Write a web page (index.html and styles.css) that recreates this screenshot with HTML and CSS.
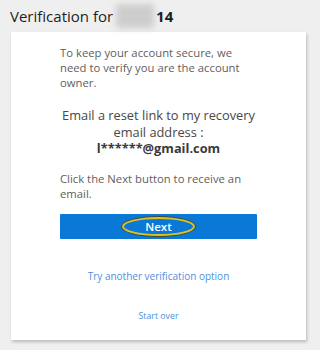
FILE: index.html
```html
<!DOCTYPE html>
<html lang="en">
<head>
    <meta charset="UTF-8">
    <meta name="viewport" content="width=device-width, initial-scale=1.0">
    <title>Verification</title>
    <link rel="stylesheet" href="styles.css">
</head>
<body>
    <div class="page">
        <h1 class="title">Verification for <span class="blur"></span><b>14</b></h1>
        <div class="card">
            <p class="intro">To keep your account secure, we need to verify you are the account owner.</p>
            <p class="method">Email a reset link to my recovery email address :<br><b>l******@gmail.com</b></p>
            <p class="intro hint">Click the Next button to receive an email.</p>
            <button class="next"><span class="ring">Next</span></button>
            <a class="link other" href="#">Try another verification option</a>
            <a class="link over" href="#">Start over</a>
        </div>
    </div>
</body>
</html>
```

FILE: styles.css
```css
body {
    margin: 0;
    font-family: "Open Sans", Arial, sans-serif;
    background-color: #efefef;
    color: #555;
}
.page {
    width: 320px;
    height: 350px;
    overflow: hidden;
}
.title {
    margin: 0;
    height: 32px;
    padding-left: 10px;
    font-size: 15px;
    font-weight: 400;
    line-height: 31px;
    color: #1e1e1e;
    display: flex;
    align-items: center;
}
.title .blur {
    display: inline-block;
    width: 38px;
    height: 24px;
    margin-left: 3px;
    background: #cdcdcd;
    filter: blur(3px);
}
.title b {
    font-weight: 700;
    margin-left: 2px;
}
.card {
    margin-left: 11px;
    width: 295px;
    height: 308px;
    box-sizing: border-box;
    padding: 13px 49px 0;
    background: #fff;
    box-shadow: 1px 2px 3px rgba(0, 0, 0, 0.22);
    display: flex;
    flex-direction: column;
}
.intro {
    margin: 0;
    font-size: 11.3px;
    line-height: 15px;
    color: #606060;
}
.method {
    margin: 17px -6px 0;
    font-size: 12.8px;
    line-height: 16.5px;
    text-align: center;
    color: #474747;
}
.method b {
    color: #3a3a3a;
}
.hint {
    margin-top: 14px;
}
.next {
    margin-top: 13px;
    height: 25px;
    border: none;
    border-radius: 1px;
    background-color: #0a78d7;
    color: #fff;
    font-family: inherit;
    font-size: 11.5px;
    font-weight: 600;
    padding: 0;
    display: flex;
    justify-content: center;
    align-items: center;
}
.ring {
    width: 69px;
    height: 15px;
    line-height: 15px;
    border: 2px solid #d8c227;
    border-radius: 50%;
    box-shadow: 0 0 0 1px #4a4a2a;
}
.link {
    text-decoration: none;
    color: #4f8fe0;
    text-align: center;
}
.other {
    margin-top: 30px;
    font-size: 10px;
    line-height: 14px;
}
.over {
    margin-top: 27px;
    font-size: 8.8px;
    line-height: 13px;
}
```
